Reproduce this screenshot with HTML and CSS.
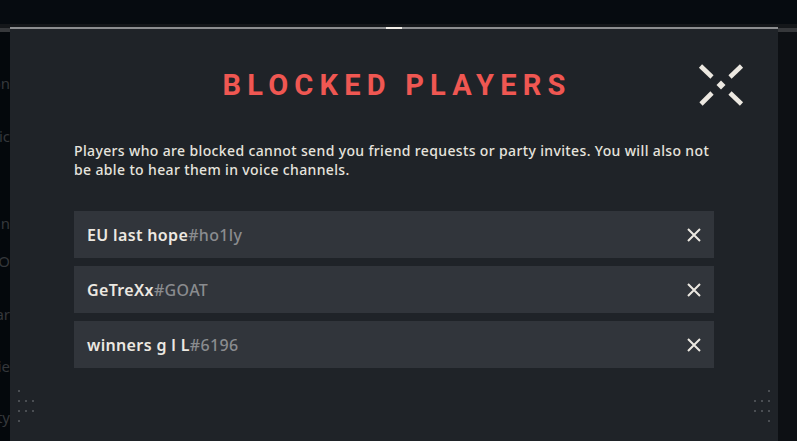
FILE: index.html
```html
<!DOCTYPE html>
<html>
<head>
<meta charset="utf-8">
<link rel="stylesheet" href="styles.css">
</head>
<body>
<div class="backdrop">
  <div class="top"></div>
  <div class="band-a"></div>
  <div class="band-b"></div>
  <div class="main">
    <div class="side">
      <span class="lbl l1">Region</span>
      <span class="lbl l2">Logic</span>
      <span class="lbl l3">Settin</span>
      <span class="lbl l4">MO</span>
      <span class="lbl l5">Clar</span>
      <span class="lbl l6">Frie</span>
      <span class="lbl l7">Party</span>
    </div>
    <div class="rest"></div>
  </div>
</div>

<section class="modal">
  <span class="tick"></span>
  <header class="head">
    <h1 class="title">BLOCKED PLAYERS</h1>
    <button class="close" aria-label="Close">
      <svg width="50" height="46" viewBox="0 0 50 46">
        <g stroke="#ece8e1" stroke-width="4.6" stroke-linecap="butt">
          <line x1="4.5" y1="4" x2="16" y2="15"/>
          <line x1="45.5" y1="4" x2="34" y2="15"/>
          <line x1="16" y1="31" x2="5" y2="42"/>
          <line x1="34" y1="31" x2="45.5" y2="42"/>
        </g>
        <polygon points="25,18.5 29.5,23 25,27.5 20.5,23" fill="#ece8e1"/>
      </svg>
    </button>
  </header>
  <p class="desc">Players who are blocked cannot send you friend requests or party invites. You will also not be able to hear them in voice channels.</p>
  <ul class="list">
    <li class="row"><span class="name">EU last hope<span class="tag">#ho1ly</span></span>
      <svg class="rx" width="14" height="14" viewBox="0 0 14 14"><path d="M1 1L13 13M13 1L1 13" stroke="#ece8e1" stroke-width="2"/></svg></li>
    <li class="row"><span class="name">GeTreXx<span class="tag">#GOAT</span></span>
      <svg class="rx" width="14" height="14" viewBox="0 0 14 14"><path d="M1 1L13 13M13 1L1 13" stroke="#ece8e1" stroke-width="2"/></svg></li>
    <li class="row"><span class="name">winners g l L<span class="tag">#6196</span></span>
      <svg class="rx" width="14" height="14" viewBox="0 0 14 14"><path d="M1 1L13 13M13 1L1 13" stroke="#ece8e1" stroke-width="2"/></svg></li>
  </ul>
  <div class="dots dl">
    <i class="d c1 r1"></i>
    <i class="d c1 r2"></i><i class="d c2 r2"></i><i class="d c3 r2"></i>
    <i class="d c1 r3"></i><i class="d c2 r3"></i><i class="d c3 r3"></i>
    <i class="d c1 r4"></i>
  </div>
  <div class="dots dr">
    <i class="d c3 r1"></i>
    <i class="d c1 r2"></i><i class="d c2 r2"></i><i class="d c3 r2"></i>
    <i class="d c1 r3"></i><i class="d c2 r3"></i><i class="d c3 r3"></i>
    <i class="d c3 r4"></i>
  </div>
</section>
</body>
</html>
```
FILE: styles.css
```css
* { box-sizing: border-box; }
html, body { margin: 0; padding: 0; }
body {
  width: 797px;
  height: 441px;
  overflow: hidden;
  position: relative;
  background: #050a10;
  font-family: "Noto Sans", Roboto, "Liberation Sans", sans-serif;
}
.backdrop {
  display: flex;
  flex-direction: column;
  height: 100%;
}
.top { height: 24px; background: #060b10; }
.band-a { height: 4px; background: #14171a; }
.band-b { height: 4px; background: #36383b; }
.main { flex: 1; display: flex; }
.side {
  width: 60px;
  background: #04080c;
  display: flex;
  flex-direction: column;
  align-items: flex-end;
  padding-right: 50px;
  padding-top: 42px;
}
.rest { flex: 1; background: #0d1014; }
.lbl {
  color: #34373b;
  font-size: 15px;
  line-height: 18px;
  white-space: nowrap;
}
.l2 { margin-top: 35px; }
.l3 { margin-top: 69px; }
.l4 { margin-top: 20px; }
.l5 { margin-top: 35px; }
.l6 { margin-top: 34px; }
.l7 { margin-top: 33px; }

.modal {
  position: absolute;
  left: 10px;
  top: 27px;
  width: 768px;
  bottom: 0;
  background: #1f2328;
  border-top: 2px solid #8c8e90;
  padding: 0 64px;
}
.tick {
  position: absolute;
  left: 376px;
  top: -2px;
  width: 16px;
  height: 2px;
  background: #f2efe9;
}
.head {
  position: relative;
  height: 112px;
  display: flex;
  justify-content: center;
}
.title {
  margin: 39px 0 0 6px;
  font-family: Roboto, "Liberation Sans", sans-serif;
  font-size: 29px;
  line-height: 34px;
  font-weight: 700;
  letter-spacing: 6.2px;
  color: #ef5752;
}
.close {
  position: absolute;
  right: -32px;
  top: 33px;
  padding: 0;
  border: 0;
  background: none;
  display: block;
}
.close svg { display: block; }
.desc {
  margin: 0;
  color: #e6e3de;
  font-size: 14px;
  font-weight: 500;
  line-height: 19px;
  letter-spacing: 0.36px;
}
.list {
  list-style: none;
  margin: 32px 0 0;
  padding: 0;
  display: flex;
  flex-direction: column;
  gap: 8px;
}
.row {
  height: 47px;
  background: #31353b;
  display: flex;
  align-items: center;
  justify-content: space-between;
  padding: 0 13px;
}
.name {
  color: #ece8e1;
  font-size: 16px;
  font-weight: 600;
  letter-spacing: 0.35px;
}
.tag {
  color: #8a8c8f;
  font-weight: 500;
}
.rx { display: block; }
.dots {
  position: absolute;
  bottom: 19px;
  width: 16px;
  height: 32px;
}
.dl { left: 8px; }
.dr { right: 8px; }
.d {
  position: absolute;
  width: 2px;
  height: 2px;
  background: #4a4e53;
}
.c1 { left: 0; }
.c2 { left: 7px; }
.c3 { left: 14px; }
.r1 { top: 0; }
.r2 { top: 10px; }
.r3 { top: 20px; }
.r4 { top: 30px; }
```
